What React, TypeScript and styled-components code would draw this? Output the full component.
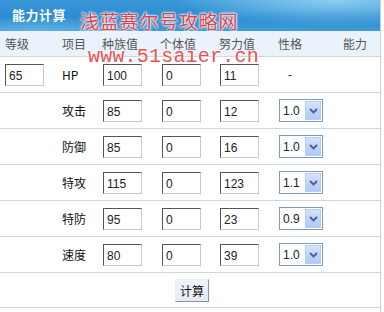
import React from 'react'
import styled, { createGlobalStyle } from 'styled-components'

const GlobalStyle = createGlobalStyle`
  html, body {
    margin: 0;
    padding: 0;
    background: #ffffff;
  }
  body {
    font-family: "Liberation Sans", "Noto Sans CJK SC", sans-serif;
    font-size: 12px;
    color: #222;
  }
`

const Panel = styled.div`
  position: relative;
  width: 380px;
  height: 312px;
  border-right: 1px solid #c9d3dc;
  overflow: hidden;
`
const TitleBar = styled.div`
  height: 31px;
  display: flex;
  align-items: center;
  padding: 0 0 3px 12px;
  box-sizing: border-box;
  background:
    radial-gradient(ellipse 60% 120% at 88% 0%, rgba(150, 212, 245, 0.9) 0%, rgba(150, 212, 245, 0) 70%),
    radial-gradient(ellipse 40% 60% at 10% 100%, rgba(120, 190, 235, 0.6) 0%, rgba(120, 190, 235, 0) 80%),
    linear-gradient(180deg, #3a98d8 0%, #2b8cd0 55%, #3d9bd8 100%);
`
const Title = styled.span`
  color: #ffffff;
  font-family: "Noto Sans CJK SC", sans-serif;
  font-weight: 700;
  font-size: 13px;
  letter-spacing: 0.5px;
`
const Row = styled.div<{ $head?: boolean; $h?: number }>`
  display: grid;
  grid-template-columns: 57px 40px 58px 59px 59px 65px 1fr;
  align-items: center;
  padding-left: 5px;
  height: ${(p) => p.$h ?? 35}px;
  border-bottom: 1px solid #cdd7e0;
  background: ${(p) => (p.$head ? '#eaf3fb' : '#ffffff')};
`
const HeadCell = styled.span`
  font-family: "Noto Sans CJK SC", sans-serif;
  font-size: 12px;
  color: #555;
  padding-bottom: 1px;
`
const Label = styled.span`
  font-family: "Noto Sans CJK SC", sans-serif;
  font-size: 12px;
  color: #111;
`
const Cell = styled.div<{ $shift?: number }>`
  display: flex;
  align-items: center;
  padding-left: ${(p) => p.$shift ?? 1}px;
`
const Field = styled.input`
  box-sizing: border-box;
  width: 39px;
  height: 22px;
  padding: 2px 0 0 3px;
  margin: 0;
  font-family: "Liberation Sans", sans-serif;
  font-size: 12px;
  color: #222;
  background: #fff;
  border-style: solid;
  border-width: 1px;
  border-color: #555 #c8c8c8 #c8c8c8 #555;
  outline: none;
`
const Dash = styled.span`
  padding-left: 10px;
  font-size: 12px;
  color: #222;
`
const Select = styled.div`
  box-sizing: border-box;
  width: 44px;
  height: 23px;
  border: 1px solid #7f9db9;
  display: flex;
  align-items: center;
  justify-content: space-between;
  padding: 1px;
  background: #fff;
`
const SelectText = styled.span`
  font-family: "Liberation Sans", sans-serif;
  font-size: 12px;
  color: #222;
  padding-left: 2px;
`
const Arrow = styled.span`
  width: 16px;
  height: 19px;
  display: flex;
  align-items: center;
  justify-content: center;
  border: 1px solid #b9cdf4;
  box-sizing: border-box;
  background: linear-gradient(180deg, #d6e3fd 0%, #c0d3fb 50%, #b2c9f8 100%);
`
const Footer = styled.div`
  height: 34px;
  display: flex;
  align-items: center;
  justify-content: center;
  padding-left: 4px;
  border-bottom: 1px solid #cdd7e0;
`
const Button = styled.button`
  box-sizing: border-box;
  width: 34px;
  height: 23px;
  padding: 0;
  font-family: "Noto Sans CJK SC", sans-serif;
  font-size: 12px;
  color: #111;
  background: linear-gradient(180deg, #f0f5fb 0%, #e2ebf6 100%);
  border-style: solid;
  border-width: 1px;
  border-color: #e8eef6 #8a94a0 #8a94a0 #e8eef6;
`
const Mark = styled.div`
  position: absolute;
  left: 80px;
  top: 7px;
  font-family: "Noto Sans CJK SC", sans-serif;
  font-size: 19px;
  letter-spacing: 0.8px;
  color: #dc4650;
  text-shadow: 0 0 2px #fff, 0 0 2px #fff, 0 0 3px #fff;
  white-space: nowrap;
  pointer-events: none;
`
const Site = styled.div`
  position: absolute;
  left: 88px;
  top: 45px;
  font-family: "Liberation Mono", monospace;
  font-size: 20px;
  letter-spacing: 0.2px;
  color: #ec5252;
  text-shadow: 0 0 2px #fff, 0 0 2px #fff;
  white-space: nowrap;
  pointer-events: none;
`

const ChevronDown = () => (
  <svg width='9' height='6' viewBox='0 0 9 6'>
    <path d='M1 1 L4.5 4.5 L8 1' fill='none' stroke='#4a5f8a' strokeWidth='1.8' />
  </svg>
)

const stats = [
  { name: '攻击', base: '85', iv: '0', ev: '12', nature: '1.0' },
  { name: '防御', base: '85', iv: '0', ev: '16', nature: '1.0' },
  { name: '特攻', base: '115', iv: '0', ev: '123', nature: '1.1' },
  { name: '特防', base: '95', iv: '0', ev: '23', nature: '0.9' },
  { name: '速度', base: '80', iv: '0', ev: '39', nature: '1.0' }
]

const heads = ['等级', '项目', '种族值', '个体值', '努力值', '性格', '能力']

export default function App() {
  return (
    <>
      <GlobalStyle />
      <Panel>
        <TitleBar>
          <Title>能力计算</Title>
        </TitleBar>
        <Row $head $h={25}>
          {heads.map((h) => (
            <HeadCell key={h}>{h}</HeadCell>
          ))}
        </Row>
        <Row>
          <Cell $shift={0}>
            <Field defaultValue='65' />
          </Cell>
          <Label>HP</Label>
          <Cell>
            <Field defaultValue='100' />
          </Cell>
          <Cell $shift={2}>
            <Field defaultValue='0' />
          </Cell>
          <Cell>
            <Field defaultValue='11' />
          </Cell>
          <Dash>-</Dash>
          <span />
        </Row>
        {stats.map((s) => (
          <Row key={s.name}>
            <span />
            <Label>{s.name}</Label>
            <Cell>
              <Field defaultValue={s.base} />
            </Cell>
            <Cell $shift={2}>
              <Field defaultValue={s.iv} />
            </Cell>
            <Cell>
              <Field defaultValue={s.ev} />
            </Cell>
            <Cell>
              <Select>
                <SelectText>{s.nature}</SelectText>
                <Arrow>
                  <ChevronDown />
                </Arrow>
              </Select>
            </Cell>
            <span />
          </Row>
        ))}
        <Footer>
          <Button>计算</Button>
        </Footer>
        <Mark>浅蓝赛尔号攻略网</Mark>
        <Site>www.51saier.cn</Site>
      </Panel>
    </>
  )
}
